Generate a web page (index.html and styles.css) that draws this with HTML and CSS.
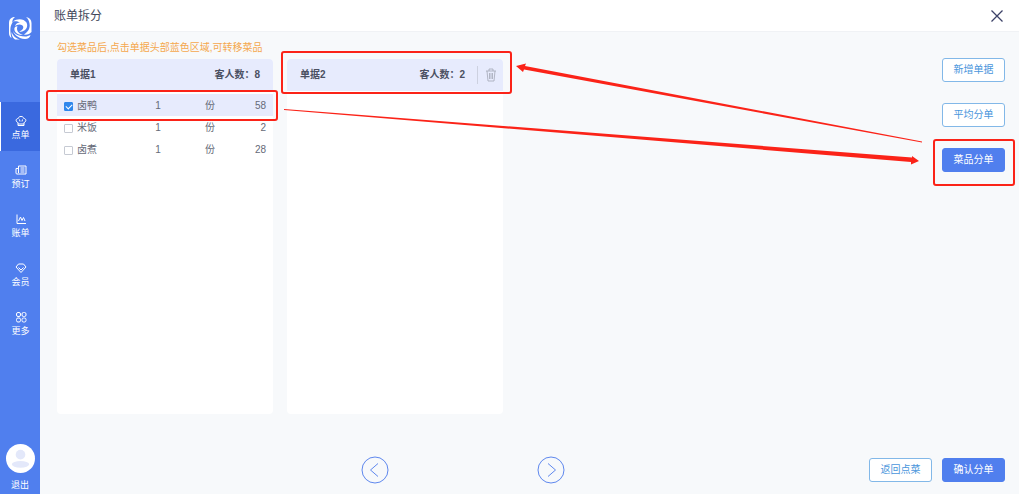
FILE: index.html
```html
<!DOCTYPE html>
<html lang="zh-CN">
<head>
  <meta charset="UTF-8" />
  <meta name="viewport" content="width=device-width, initial-scale=1.0"/>
  <title>账单拆分</title>
  <link rel="stylesheet" href="styles.css">
</head>
<body>

<div class="app">
  <!-- Sidebar -->
  <aside class="sidebar">
    <svg class="logo" viewBox="0 0 24 24" fill="#fff">
      <path d="M7 1C3 1 1 3.500 1 7V17C1 19.500 2 21 3.500 22C1.800 15 2 10 4.500 6.500C3.800 5 5 2.500 7 1Z"/>
      <path d="M18 1C21.500 1.500 23.500 3.500 23.500 7V16C22 18 19 19 15.500 18.500C20 16.500 22.500 12 21.500 7.500C21 4.500 20 2.500 18 1Z"/>
      <path d="M5 5.500C9 2 16 2.500 18.500 6.500C21 11.500 16.500 16.500 11 15.500C14.500 14.500 16.500 11.500 14.500 9.500C12 7.500 8.500 8.500 7 10.500C7.500 8 9.500 6.500 12 6.500C9.500 5 7 5 5 5.500Z"/>
      <path d="M4 11C4 17 10 21 18.500 20.500L22.500 19C22 21.500 20 23 17 23C10 22.500 4.500 18 4 11Z"/>
      <path d="M3.500 16C5 20 8 22.500 12 23.500H7C4.500 22 3.500 19 3.500 16Z"/>
      <path d="M9.500 10.500C8 14 10 17.500 15 19C9 19.500 5.500 15 6.500 12C7 11 8.500 10 9.500 10.500Z"/>
    </svg>
    <nav class="menu">
      <a href="#" class="menu-item active">
        <svg class="menu-icon" viewBox="0 0 12 12"><path d="M3 7.500C.5 7 .5 3.500 3.200 3.500C3.500 .8 8.500 .8 8.800 3.500C11.500 3.500 11.500 7 9 7.500V10.500H3ZM3 9H9M4.500 4.500L5 6.500M7.500 4.500L7 6.500"/></svg>
        <span>点单</span>
      </a>
      <a href="#" class="menu-item">
        <svg class="menu-icon" viewBox="0 0 12 12"><path d="M3.500 2H11V10H2Q1 10 1 9V4.500H3.500ZM3.500 2V9M5.500 4H9.500M5.500 6H9.500M5.500 8H9.500"/></svg>
        <span>预订</span>
      </a>
      <a href="#" class="menu-item">
        <svg class="menu-icon" viewBox="0 0 12 12"><path d="M2 1.500V10.500H11M3.500 8L5.500 4L7 7.500L8.500 4.500L10 8"/></svg>
        <span>账单</span>
      </a>
      <a href="#" class="menu-item">
        <svg class="menu-icon" viewBox="0 0 12 12"><path d="M3.500 2H8.500L11 5L6 10.500L1 5ZM3.500 5.500L6 8L8.500 5.500"/></svg>
        <span>会员</span>
      </a>
      <a href="#" class="menu-item">
        <svg class="menu-icon" viewBox="0 0 12 12"><rect x="1.500" y="1.500" width="4" height="4" rx="1.500"/><rect x="7" y="1.500" width="4" height="4" rx="1.500"/><rect x="1.500" y="7" width="4" height="4" rx="1.500"/><rect x="7" y="7" width="4" height="4" rx="1.500"/></svg>
        <span>更多</span>
      </a>
    </nav>
    <a href="#" class="logout">
      <svg class="avatar" viewBox="0 0 30 30">
        <circle cx="15" cy="15" r="15" fill="#fff"/>
        <circle cx="15" cy="11" r="5" fill="#e3e8fa"/>
        <ellipse cx="15" cy="21" rx="9" ry="3.500" fill="#e3e8fa"/>
      </svg>
      <span>退出</span>
    </a>
  </aside>

  <div class="page">
    <header class="page-header">
      <h1>账单拆分</h1>
      <button type="button" class="close" aria-label="关闭">
        <svg width="14" height="14" viewBox="0 0 14 14"><path d="M1.500 1.500L12.500 12.500M12.500 1.500L1.500 12.500" stroke="#3d4268" stroke-width="1.300"/></svg>
      </button>
    </header>

    <main class="content">
      <div class="split-area">
        <div class="bills">
          <p class="tip">勾选菜品后,点击单据头部蓝色区域,可转移菜品</p>
          <div class="bill-list">
            <section class="bill">
              <div class="bill-head">
                <h2>单据1</h2>
                <span class="guests">客人数：8</span>
              </div>
              <table class="dishes">
                <tr class="selected">
                  <td class="name"><label><input type="checkbox" checked>卤鸭</label></td>
                  <td class="count">1</td>
                  <td class="unit">份</td>
                  <td class="price">58</td>
                </tr>
                <tr>
                  <td class="name"><label><input type="checkbox">米饭</label></td>
                  <td class="count">1</td>
                  <td class="unit">份</td>
                  <td class="price">2</td>
                </tr>
                <tr>
                  <td class="name"><label><input type="checkbox">卤煮</label></td>
                  <td class="count">1</td>
                  <td class="unit">份</td>
                  <td class="price">28</td>
                </tr>
              </table>
            </section>

            <section class="bill">
              <div class="bill-head">
                <h2>单据2</h2>
                <span class="guests">客人数：2</span>
                <button type="button" class="delete" aria-label="删除单据">
                  <svg width="10" height="14" viewBox="0 0 10 14" fill="none" stroke="#a3a7b5"><path d="M0 3H10M3 3V1H7V3M1 3L2 13H8L9 3M3.500 5V11M5 5V11M6.500 5V11" stroke-width=".8"/></svg>
                </button>
              </div>
            </section>
          </div>
        </div>

        <div class="actions">
          <button type="button" class="btn">新增单据</button>
          <button type="button" class="btn">平均分单</button>
          <button type="button" class="btn primary">菜品分单</button>
        </div>
      </div>

      <footer class="bottom-bar">
        <div class="pager">
          <button type="button" class="page-btn" aria-label="上一页">
            <svg width="28" height="28" viewBox="0 0 28 28"><circle cx="14" cy="14" r="13"/><path d="M17 7.500L9.500 14L17 20.500"/></svg>
          </button>
          <button type="button" class="page-btn" aria-label="下一页">
            <svg width="28" height="28" viewBox="0 0 28 28"><circle cx="14" cy="14" r="13"/><path d="M11 7.500L18.500 14L11 20.500"/></svg>
          </button>
        </div>
        <button type="button" class="btn">返回点菜</button>
        <button type="button" class="btn primary">确认分单</button>
      </footer>
    </main>
  </div>

  <!-- Guide marks over the page -->
  <svg class="guide" viewBox="0 0 1019 494" preserveAspectRatio="none">
    <g fill="none" stroke="#fb2318" stroke-width="2">
      <rect x="47" y="91" width="230" height="29" rx="2"/>
      <rect x="282" y="52" width="229" height="41" rx="2"/>
      <rect x="934" y="140" width="80" height="45" rx="2"/>
    </g>
    <g fill="#fb2318">
      <path d="M284 109L912 157.500L912 156L919 161L911 164.500L911 162L284 110Z"/>
      <path d="M922 141.500L525 66L526 63.500L516 66L523 72L524 69.500L922 142.500Z"/>
    </g>
  </svg>
</div>

</body>
</html>
```

FILE: styles.css
```css
* {
  box-sizing: border-box;
}

body {
  margin: 0;
  font-family: "Liberation Sans", "Noto Sans CJK SC", sans-serif;
  font-size: 10px;
  line-height: 14px;
  color: #666a78;
  background: #f7f9fb;
}

h1, h2, p {
  margin: 0;
}

button {
  padding: 0;
  border: none;
  background: none;
  font: inherit;
  cursor: pointer;
}

svg {
  display: block;
}

a {
  color: #fff;
  text-decoration: none;
}

.app {
  position: relative;
  display: flex;
  min-height: 100vh;
}

/* sidebar */
.sidebar {
  display: flex;
  flex-direction: column;
  align-items: center;
  width: 40px;
  padding: 16px 0 2px;
  background: #507fee;
  font-size: 9px;
}

.logo {
  width: 24px;
  height: 24px;
}

.menu {
  width: 100%;
  margin-top: 62px;
}

.menu-item {
  display: flex;
  flex-direction: column;
  align-items: center;
  justify-content: center;
  gap: 1px;
  height: 49px;
  padding-top: 4px;
  border-left: 1px solid transparent;
}

.menu-item.active {
  background: #3a69df;
  border-left-color: #fff;
}

.menu-icon {
  width: 12px;
  height: 12px;
  fill: none;
  stroke: #fff;
}

.logout {
  display: flex;
  flex-direction: column;
  align-items: center;
  gap: 5px;
  margin-top: auto;
}

.avatar {
  width: 29px;
  height: 29px;
}

/* page */
.page {
  display: flex;
  flex-direction: column;
  flex: 1;
}

.page-header {
  display: flex;
  align-items: center;
  justify-content: space-between;
  height: 32px;
  padding: 0 15px 0 14px;
  background: #fff;
  border-bottom: 1px solid #f0f2f5;
}

.page-header h1 {
  font-size: 12px;
  font-weight: normal;
  color: #42475a;
}

.content {
  display: flex;
  flex-direction: column;
  flex: 1;
  gap: 44px;
  padding: 9px 14px 12px 17px;
}

.split-area {
  display: flex;
  justify-content: space-between;
  flex: 1;
}

.bills {
  display: flex;
  flex-direction: column;
  gap: 4px;
}

.tip {
  color: #f5a84e;
}

.bill-list {
  display: flex;
  flex: 1;
  gap: 14px;
}

.bill {
  width: 216px;
  background: #fff;
  border-radius: 4px;
}

.bill-head {
  display: flex;
  align-items: center;
  height: 32px;
  margin-bottom: 3px;
  padding: 0 13px;
  background: #e7ebfd;
  border-radius: 4px 4px 0 0;
  font-weight: bold;
  color: #4b5062;
}

.bill-head h2 {
  flex: 1;
  font-size: 10px;
}

.delete {
  margin-left: 12px;
  padding: 2px 0 2px 8px;
  border-left: 1px solid #cdd1e0;
  margin-right: -6px;
}

.dishes {
  width: 100%;
  border-collapse: collapse;
  table-layout: fixed;
}

.dishes td {
  height: 22px;
  padding: 2px 0 0;
  text-align: center;
}

.dishes .selected {
  background: #e7ebfd;
}

.dishes .name {
  width: 75px;
  padding-left: 7px;
}

.dishes .count {
  width: 52px;
}

.dishes .unit {
  width: 52px;
}

.dishes .price {
  padding-right: 7px;
  text-align: right;
}

.name label {
  display: flex;
  align-items: center;
  gap: 4px;
}

.name input {
  appearance: none;
  width: 9px;
  height: 9px;
  margin: 0;
  border: 1px solid #c6cad3;
  border-radius: 1px;
  background: #fff;
}

.name input:checked {
  display: grid;
  place-items: center;
  border-color: #2f86ec;
  background: #2f86ec;
}

.name input:checked::before {
  content: "";
  width: 5px;
  height: 3px;
  border: solid #fff;
  border-width: 0 0 1px 1px;
  transform: rotate(-45deg);
}

.actions {
  display: flex;
  flex-direction: column;
  gap: 21px;
  padding-top: 17px;
}

.btn {
  width: 63px;
  height: 24px;
  border: 1px solid #82b8e8;
  border-radius: 3px;
  background: #fff;
  color: #4a96dc;
}

.btn.primary {
  border-color: #507fee;
  background: #507fee;
  color: #fff;
}

.bottom-bar {
  display: flex;
  align-items: center;
  gap: 10px;
  height: 24px;
}

.pager {
  display: flex;
  justify-content: center;
  flex: 1;
  gap: 148px;
  margin-left: 10px;
}

.page-btn svg {
  fill: none;
  stroke: #5f88ee;
}

/* guide marks */
.guide {
  position: absolute;
  top: 0;
  left: 0;
  width: 100%;
  height: 100%;
  pointer-events: none;
}
```
